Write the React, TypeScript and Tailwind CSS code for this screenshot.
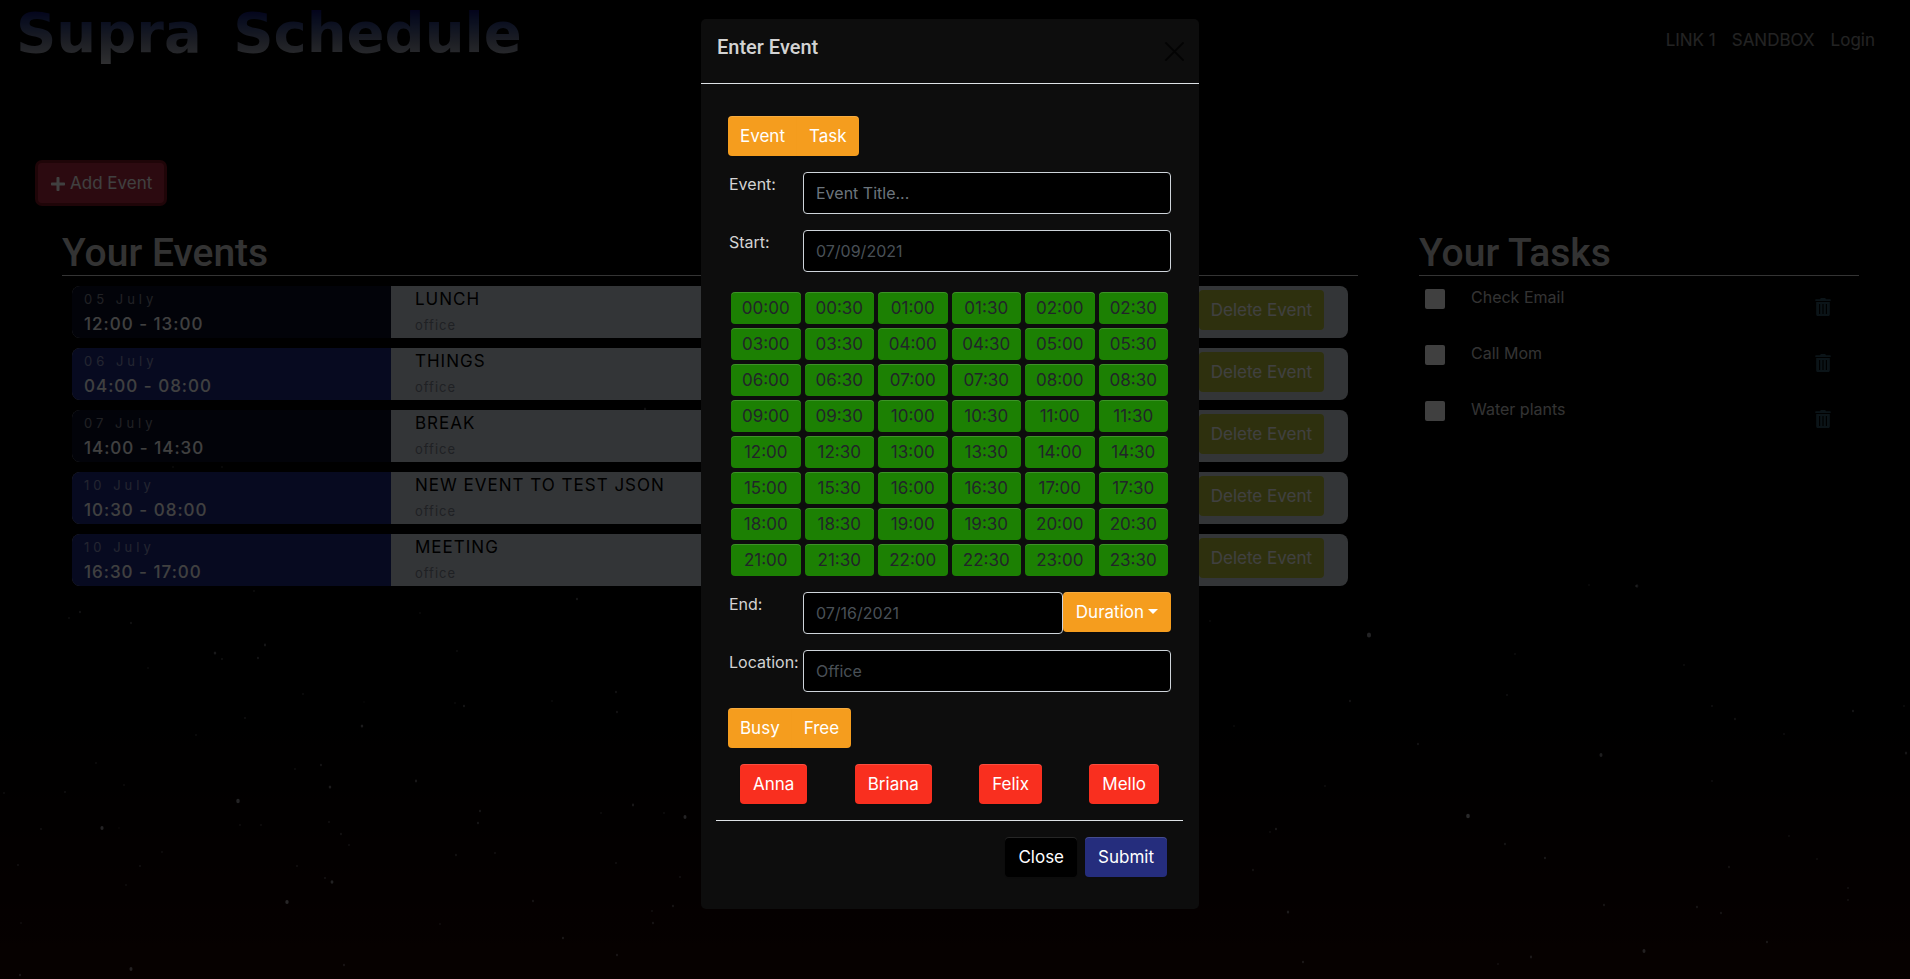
import { FaPlus } from "react-icons/fa";

type EventItem = { date: string; time: string; title: string; place: string; past: boolean };

const events: EventItem[] = [
  { date: "05 July", time: "12:00 - 13:00", title: "LUNCH", place: "office", past: true },
  { date: "06 July", time: "04:00 - 08:00", title: "THINGS", place: "office", past: false },
  { date: "07 July", time: "14:00 - 14:30", title: "BREAK", place: "office", past: true },
  { date: "10 July", time: "10:30 - 08:00", title: "NEW EVENT TO TEST JSON", place: "office", past: false },
  { date: "10 July", time: "16:30 - 17:00", title: "MEETING", place: "office", past: false },
];

const tasks = ["Check Email", "Call Mom", "Water plants"];
const people = ["Anna", "Briana", "Felix", "Mello"];

const slots = Array.from({ length: 48 }, (_, i) => {
  const hour = String(Math.floor(i / 2)).padStart(2, "0");
  return `${hour}:${i % 2 ? "30" : "00"}`;
});

// x, y, radius and brightness of each star
const stars: [number, number, number, number][] = [
  [254, 591, 1, 0.3], [577, 599, 1.3, 0.4], [80, 612, 1.3, 0.35], [69, 618, 1, 0.3], [131, 623, 1.2, 0.35],
  [265, 645, 1.4, 0.4], [215, 653, 1.6, 0.45], [222, 659, 1, 0.4], [258, 658, 1.2, 0.4], [148, 668, 1, 0.25],
  [457, 651, 1, 0.3], [420, 613, 1, 0.25], [303, 694, 1, 0.3], [364, 702, 0.8, 0.25], [455, 703, 1, 0.25],
  [464, 706, 1.3, 0.4], [616, 692, 1.3, 0.35], [617, 712, 1.3, 0.35], [552, 701, 1, 0.25], [245, 718, 1.1, 0.35],
  [362, 726, 1.6, 0.5], [196, 735, 1, 0.3], [96, 763, 1, 0.3], [321, 765, 1.2, 0.4], [295, 769, 1, 0.3],
  [416, 781, 1.4, 0.45], [330, 787, 1.6, 0.5], [238, 801, 2.2, 0.65], [65, 792, 1.1, 0.35], [124, 785, 0.9, 0.3],
  [4, 793, 1, 0.3], [102, 828, 2, 0.65], [41, 829, 1.1, 0.35], [119, 828, 0.8, 0.25], [240, 825, 1, 0.3],
  [261, 825, 1, 0.3], [329, 822, 1.1, 0.35], [341, 834, 1.2, 0.35], [349, 845, 1, 0.35], [480, 811, 1.3, 0.4],
  [478, 823, 1.3, 0.4], [456, 855, 1.2, 0.35], [495, 853, 1.1, 0.35], [162, 852, 1, 0.3], [140, 866, 1.1, 0.35],
  [18, 865, 1.1, 0.35], [297, 866, 1.1, 0.35], [332, 882, 1.8, 0.6], [325, 878, 1.1, 0.4], [287, 902, 2.1, 0.7],
  [126, 885, 1, 0.3], [533, 901, 1.2, 0.4], [440, 924, 1, 0.3], [563, 938, 1.3, 0.45], [131, 969, 1.9, 0.6],
  [344, 965, 1.2, 0.4], [20, 975, 1.3, 0.45], [21, 923, 1, 0.3], [633, 805, 1.4, 0.45], [685, 817, 1.9, 0.65],
  [601, 813, 1, 0.3], [664, 813, 1, 0.3], [673, 906, 1.2, 0.4], [652, 911, 1, 0.35], [653, 923, 1.2, 0.4],
  [617, 955, 1.3, 0.4], [680, 877, 1.1, 0.35], [616, 863, 1.1, 0.35],
  [1637, 586, 1.7, 0.4], [1589, 585, 1, 0.25], [1369, 635, 2.6, 0.65], [1210, 621, 1, 0.25], [1515, 654, 1, 0.3],
  [1684, 665, 1, 0.3], [1350, 701, 1.3, 0.35], [1507, 695, 1.1, 0.35], [1712, 706, 1.1, 0.35], [1735, 719, 1.2, 0.35],
  [1853, 711, 1.3, 0.4], [1784, 734, 1.1, 0.3], [1418, 744, 1.3, 0.35], [1601, 755, 1.9, 0.55], [1712, 781, 1.1, 0.3],
  [1234, 726, 1, 0.25], [1325, 786, 1, 0.3], [1468, 816, 2.3, 0.75], [1276, 829, 1.3, 0.45], [1270, 832, 1, 0.3],
  [1505, 844, 1.2, 0.4], [1545, 858, 1.3, 0.45], [1789, 836, 1, 0.3], [1817, 859, 1, 0.3], [1729, 867, 1.2, 0.35],
  [1253, 870, 1.2, 0.35], [1288, 912, 1.5, 0.5], [1604, 905, 1.2, 0.4], [1697, 907, 1.2, 0.4], [1721, 913, 1.2, 0.4],
  [1848, 888, 1.1, 0.35], [1848, 900, 1.1, 0.35], [1767, 942, 1.3, 0.45], [1644, 951, 1.9, 0.6], [1531, 957, 1.4, 0.45],
  [1303, 962, 1.3, 0.45], [1498, 964, 1, 0.35], [1906, 753, 1.5, 0.4], [1904, 706, 1, 0.3],
  [1636, 586, 1, 0.4], [645, 409, 1.5, 0.3], [173, 467, 1, 0.25], [222, 467, 1, 0.25],
];

const btnBase =
  "h-10 rounded pt-0.5 text-[17px] text-white shadow-[inset_0_1px_0_rgba(255,255,255,0.15),0_1px_1px_rgba(0,0,0,0.075)]";
const btn = `${btnBase} px-[13px]`;
const groupBtn = `${btnBase} bg-[#f59d1e] px-3`;
const field =
  "h-[42px] min-w-0 flex-1 rounded border border-[#ced4da] bg-black px-3 text-base";
const label = "w-[75px] pl-px text-base";

function TrashIcon() {
  return (
    <svg viewBox="0 0 16 18" className="h-[18px] w-4 fill-[#2e5062]" aria-hidden="true">
      <path
        fillRule="evenodd"
        d="M5 1.2 5.8 0h4.4l.8 1.2h4.2c.3 0 .5.2.5.5v1.2H.3V1.700c0-.3.2-.5.5-.5zM1.200 4h13.600v12.500c0 .8-.6 1.500-1.400 1.500H2.600c-.8 0-1.400-.7-1.400-1.500zM4 6v10h1.200V6zm3.400 0v10h1.200V6zm3.400 0v10H12V6z"
      />
    </svg>
  );
}

function StarField() {
  return (
    <svg className="pointer-events-none absolute inset-0 h-full w-full" aria-hidden="true">
      {stars.map(([x, y, r, o], i) => (
        <ellipse key={i} cx={x} cy={y} rx={r * 0.8} ry={r} fill="#d8d8e0" opacity={o} />
      ))}
    </svg>
  );
}

function Header() {
  return (
    <header className="flex h-20 items-start justify-between pr-5 pl-4">
      <h1 className="bg-linear-to-b from-[#101070] from-15% via-[#747a90] via-60% to-[#d0d0d0] bg-clip-text pb-1 font-['DejaVu_Sans',sans-serif] text-[56px] leading-[66px] font-bold text-transparent">
        Supra <span className="ml-3">Schedule</span>
      </h1>
      <nav className="flex gap-4 self-center pt-0.5 text-[17px] text-white/55">
        <a href="#link1">LINK 1</a>
        <a href="#sandbox">SANDBOX</a>
        <a href="#login">Login</a>
      </nav>
    </header>
  );
}

function EventCard({ event }: { event: EventItem }) {
  return (
    <li className="flex h-[52px] overflow-hidden rounded-lg bg-[#ccd3d9]">
      <div
        className={`flex w-1/4 flex-col justify-center pl-3 tracking-[1px] ${event.past ? "bg-[#080c24]" : "bg-[#1c2880]"}`}
      >
        <p className="text-[13px] leading-6 tracking-[4px] text-white/50">{event.date}</p>
        <p className="text-[17px] leading-[26px] font-medium text-white">{event.time}</p>
      </div>
      <div className="flex flex-1 items-start justify-between pr-6 pl-6 tracking-[1px]">
        <div>
          <p className="text-[17px] leading-[26px] text-black">{event.title}</p>
          <p className="text-[13px] leading-[26px] text-[#7c8290]">{event.place}</p>
        </div>
        <button type="button" className="mt-1 h-10 rounded bg-[#b8c038] px-3 pt-0.5 text-[17px] tracking-normal text-white">
          Delete Event
        </button>
      </div>
    </li>
  );
}

function SectionTitle({ children }: { children: string }) {
  return (
    <h2 className="border-b border-[#d0d0d0] pt-1 font-[Roboto,sans-serif] text-[39px] leading-[44px] font-medium text-[#cccccc]">
      {children}
    </h2>
  );
}

function Schedule() {
  return (
    <div className="relative min-h-screen bg-linear-to-b from-black from-55% to-[#1c0500] pr-[15px]">
      <StarField />
      <div className="relative">
        <Header />
        <button
          type="button"
          className="mt-[83px] ml-[38px] flex h-10 items-center gap-1 rounded bg-[#b02a40] px-3 pt-0.5 text-[17px] text-white shadow-[0_0_0_3px_#7c1420]"
        >
          <FaPlus className="size-4" aria-hidden="true" />
          Add Event
        </button>
        <main className="mt-6 grid grid-cols-[1296fr_440fr] gap-[61px] pr-9 pl-[62px]">
          <section>
            <SectionTitle>Your Events</SectionTitle>
            <ul className="mx-[10px] mt-[10px] flex flex-col gap-[10px]">
              {events.map((event) => (
                <EventCard key={event.title} event={event} />
              ))}
            </ul>
          </section>
          <section>
            <SectionTitle>Your Tasks</SectionTitle>
            <ul className="mt-[10px] flex flex-col">
              {tasks.map((task) => (
                <li key={task} className="flex h-14 items-start pr-7">
                  <label className="flex flex-1 items-start text-base leading-[22px] text-[#cccccc]">
                    <input type="checkbox" className="mt-[3px] mr-[26px] ml-[6px] size-5 appearance-none rounded-xs bg-white" />
                    {task}
                  </label>
                  <button type="button" aria-label={`Delete ${task}`} className="mt-3">
                    <TrashIcon />
                  </button>
                </li>
              ))}
            </ul>
          </section>
        </main>
      </div>
    </div>
  );
}

function EventDialog() {
  return (
    <div
      role="dialog"
      aria-modal="true"
      aria-labelledby="dialog-title"
      className="w-[498px] rounded-[5px] bg-[#0d0d0d] pb-8 text-[#d3d3d3]"
    >
      <div className="flex h-[65px] items-start justify-between border-b border-[#dee2e6] px-4">
        <h2 id="dialog-title" className="pt-3 font-[Roboto,sans-serif] text-xl leading-8 font-medium">
          Enter Event
        </h2>
        <button type="button" aria-label="Close dialog" className="-mr-2 pt-4 text-black/70">
          <svg viewBox="0 0 34 34" className="size-[34px]" fill="none" stroke="currentColor" strokeWidth="2" strokeLinecap="round" aria-hidden="true">
            <path d="m9 8 17 17M26 8 9 25" />
          </svg>
        </button>
      </div>
      <form className="flex flex-col gap-4 pt-8 pr-7 pl-[27px]" onSubmit={(e) => e.preventDefault()}>
        <div className="flex">
          <button type="button" className={`${groupBtn} rounded-r-none`}>Event</button>
          <button type="button" className={`${groupBtn} rounded-l-none`}>Task</button>
        </div>
        <div className="flex">
          <label htmlFor="title" className={label}>Event:</label>
          <input id="title" placeholder="Event Title..." className={`${field} placeholder:text-[#6c757d]`} />
        </div>
        <div className="flex">
          <label htmlFor="start" className={label}>Start:</label>
          <input id="start" defaultValue="07/09/2021" className={`${field} text-[#495057]`} />
        </div>
        <div className="mx-[3px] mt-1 grid grid-cols-6 gap-1">
          {slots.map((slot) => (
            <button
              key={slot}
              type="button"
              className="h-8 rounded bg-[#1c8003] pt-0.5 text-[17px] text-[#212529] shadow-[inset_0_1px_0_rgba(255,255,255,0.15)]"
            >
              {slot}
            </button>
          ))}
        </div>
        <div className="flex items-start">
          <label htmlFor="end" className={label}>End:</label>
          <input id="end" defaultValue="07/16/2021" className={`${field} text-[#495057]`} />
          <button type="button" className={`${btn} flex items-center gap-1 bg-[#f59d1e]`}>
            Duration
            <svg viewBox="0 0 10 5" className="mb-1 h-[5px] w-[10px] fill-white" aria-hidden="true">
              <path d="M0 0h10L5 5z" />
            </svg>
          </button>
        </div>
        <div className="flex">
          <label htmlFor="place" className={label}>Location:</label>
          <input id="place" defaultValue="Office" className={`${field} text-[#495057]`} />
        </div>
        <div className="flex">
          <button type="button" className={`${groupBtn} rounded-r-none`}>Busy</button>
          <button type="button" className={`${groupBtn} rounded-l-none`}>Free</button>
        </div>
        <div className="flex justify-between px-3">
          {people.map((person) => (
            <button key={person} type="button" className={`${btn} bg-[#f92f1f]`}>{person}</button>
          ))}
        </div>
        <div className="-mx-3 flex justify-end gap-2 border-t border-[#dee2e6] pt-4 pr-4">
          <button type="button" className={`${btn} bg-black`}>Close</button>
          <button type="submit" className={`${btn} bg-[#252d7d]`}>Submit</button>
        </div>
      </form>
    </div>
  );
}

export default function App() {
  return (
    <div className="relative font-['Inter','Liberation_Sans',sans-serif]">
      <Schedule />
      <div className="absolute inset-0 flex items-start justify-center bg-black/75 pt-[19px] pr-[10px]">
        <EventDialog />
      </div>
    </div>
  );
}
